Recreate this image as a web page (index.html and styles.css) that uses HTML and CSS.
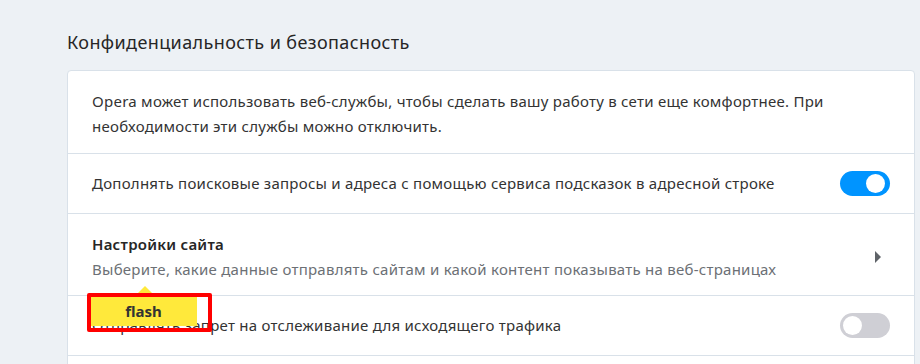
FILE: index.html
```html
<!DOCTYPE html>
<html lang="ru">
<head>
<meta charset="utf-8">
<link rel="stylesheet" href="styles.css">
</head>
<body>
<main class="page">
  <h2 class="section-title">Конфиденциальность и безопасность</h2>
  <section class="card">
    <div class="row row-info">
      <p class="text">Opera может использовать веб-службы, чтобы сделать вашу работу в сети еще комфортнее. При необходимости эти службы можно отключить.</p>
    </div>
    <div class="row row-toggle">
      <span class="text">Дополнять поисковые запросы и адреса с помощью сервиса подсказок в адресной строке</span>
      <span class="toggle on"><span class="knob"></span></span>
    </div>
    <div class="row row-link">
      <div class="texts">
        <div class="title">Настройки сайта</div>
        <div class="sub">Выберите, какие данные отправлять сайтам и какой контент показывать на веб-страницах</div>
      </div>
      <svg class="chev" width="6" height="12" viewBox="0 0 6 12"><path d="M0 0 L6 6 L0 12 Z" fill="#5f6368"/></svg>
    </div>
    <div class="row row-toggle">
      <span class="text">Отправлять запрет на отслеживание для исходящего трафика</span>
      <span class="toggle"><span class="knob"></span></span>
    </div>
    <div class="row row-toggle">
      <span class="text">&nbsp;</span>
    </div>
    <div class="tooltip">flash</div>
    <div class="highlight"></div>
  </section>
</main>
</body>
</html>
```

FILE: styles.css
```css
html, body {
  margin: 0;
  padding: 0;
}
body {
  background: #edf1f5;
  font-family: "Noto Sans", "Open Sans", sans-serif;
  color: #333;
  width: 920px;
  height: 364px;
  overflow: hidden;
}
.page {
  padding: 30px 0 0 67px;
}
.section-title {
  margin: 0 0 16px;
  font-size: 18px;
  letter-spacing: 0.4px;
  line-height: 24px;
  font-weight: 400;
  color: #262626;
}
.card {
  position: relative;
  width: 846px;
  background: #fff;
  border: 1px solid #d9e1e9;
  border-radius: 4px;
}
.row {
  display: flex;
  align-items: center;
  justify-content: space-between;
  padding: 0 24px;
  border-bottom: 1px solid #d9e1e9;
  font-size: 15px;
  letter-spacing: 0.25px;
  line-height: 25px;
}
.row-info {
  padding-top: 18px;
  padding-bottom: 14px;
}
.text {
  margin: 0;
}
.row-toggle {
  height: 59px;
}
.row-link {
  padding-top: 18px;
  padding-bottom: 13px;
}
.title {
  font-weight: 600;
  color: #262626;
}
.sub {
  color: #6c7075;
}
.chev {
  margin-right: 9px;
  display: block;
}
.toggle {
  position: relative;
  flex: none;
  width: 50px;
  height: 25px;
  border-radius: 13px;
  background: #cfcfd5;
}
.toggle.on {
  background: #0094ff;
}
.knob {
  position: absolute;
  top: 3px;
  left: 3px;
  width: 19px;
  height: 19px;
  border-radius: 50%;
  background: #fff;
}
.toggle.on .knob {
  left: auto;
  right: 5px;
}
.tooltip {
  position: absolute;
  left: 22px;
  top: 225px;
  width: 107px;
  height: 30px;
  background: #ffe93b;
  color: #333;
  font-size: 15px;
  font-weight: 700;
  line-height: 30px;
  text-align: center;
}
.tooltip::before {
  content: "";
  position: absolute;
  left: 45px;
  top: -10px;
  border-left: 10px solid transparent;
  border-right: 10px solid transparent;
  border-bottom: 10px solid #ffe93b;
}
.highlight {
  position: absolute;
  left: 19px;
  top: 222px;
  width: 117px;
  height: 31px;
  border: 4px solid #ff0000;
  border-radius: 2px;
}
```
